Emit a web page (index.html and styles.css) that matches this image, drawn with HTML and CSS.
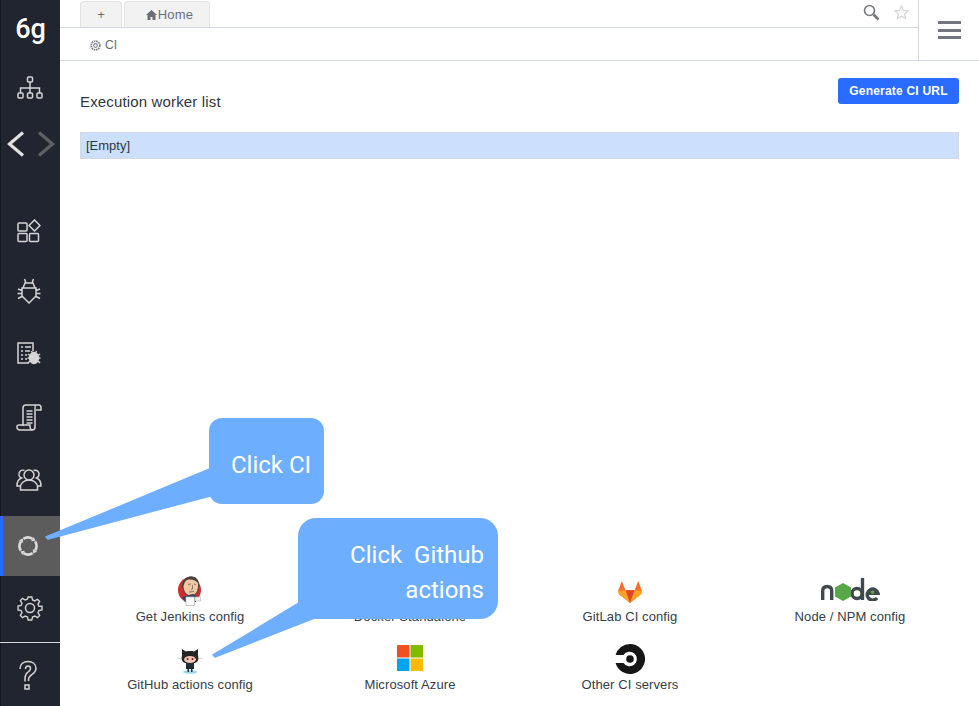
FILE: index.html
```html
<!DOCTYPE html>
<html lang="en">
<head>
<meta charset="utf-8">
<title>CI</title>
<link rel="stylesheet" href="styles.css">
</head>
<body>
<div class="app">
  <aside class="sidebar">
    <div class="logo">6g</div>
    <div class="side-item h-org">
      <svg width="26" height="26" viewBox="0 0 26 26" class="ic"><rect x="10.500" y="1" width="5" height="5" rx="1"/><path d="M13 6v6M3.500 17v-5h19v5M13 12v5"/><rect x="1" y="17" width="5" height="5" rx="1"/><rect x="10.500" y="17" width="5" height="5" rx="1"/><rect x="20" y="17" width="5" height="5" rx="1"/></svg>
    </div>
    <div class="side-nav">
      <svg width="18" height="26" viewBox="0 0 18 26" class="arrow"><path d="M16 1.500 2.500 13 16 24.500"/></svg>
      <svg width="18" height="26" viewBox="0 0 18 26" class="arrow dim"><path d="M2 1.500 15.500 13 2 24.500"/></svg>
    </div>
    <div class="side-item h-first">
      <svg width="24" height="24" viewBox="0 0 24 24" class="ic"><rect x="1" y="4" width="9" height="8" rx="1"/><rect x="1" y="14.500" width="9" height="8" rx="1"/><rect x="12.500" y="14.500" width="9" height="8" rx="1"/><path d="M17.500 1 23 6.500 17.500 12 12 6.500z"/></svg>
    </div>
    <div class="side-item h-62">
      <svg width="24" height="28" viewBox="0 0 24 28" class="ic"><path d="M7.500 1l1.500 4M16.500 1 15 5M8 5h8l2 5H6zM5 10h14v8l-7 7-7-7zM5 12.500 1 11M5 15.500H0.500M5 18.500l-4 2M19 12.500l4-1.500M19 15.500h4.500M19 18.500l4 2"/></svg>
    </div>
    <div class="side-item h-62">
      <svg width="24" height="24" viewBox="0 0 24 24" class="ic"><path d="M12 21H1V1h15v8"/><path d="M4 5h2M8 5h6M4 9h2M8 9h5M4 13h2M8 13h2M4 17h2M8 17h2"/><ellipse cx="17" cy="16" rx="4.500" ry="5.500" class="fill"/><path d="M11 12l2 1.500M10.500 16h2M11 21l2-2M23 12l-2 1.500M23.500 16h-2M23 21l-2-2M14.500 9l1 2M19.500 9l-1 2"/></svg>
    </div>
    <div class="side-item h-64 scroll">
      <svg width="26" height="28" viewBox="0 0 26 28" class="ic"><path d="M7 22V4c0-2 1-3 3-3h13c1 0 2 1 2 3v2h-5M20 1c-1 0-1 2-1 5v17c0 2-1 3-3 3H4c-2 0-3-1-3-3v-1c0-1 1-1 2-1h11v2c0 2 2 3 3 3"/><path d="M10.500 7h6M10.500 10h6M10.500 13h6M10.500 16h6M10.500 19h6"/></svg>
    </div>
    <div class="side-item h-67 users">
      <svg width="26" height="24" viewBox="0 0 26 24" class="ic"><circle cx="13" cy="7" r="5"/><path d="M4.500 22v-3c0-4 4-7 8.500-7s8.500 3 8.500 7v3z"/><path d="M8.500 2.500a4 4 0 0 0-3 7.500C2.500 11 1 14 1 18h3.500M17.500 2.500a4 4 0 0 1 3 7.500c3 1 4.500 4 4.500 8h-3.500"/></svg>
    </div>
    <div class="side-item active">
      <svg width="24" height="24" viewBox="0 0 24 24" class="ci"><circle cx="12" cy="12" r="8.500" pathLength="40" stroke-dasharray="7.200 2.800" transform="rotate(57 12 12)"/><path class="head" d="M21 17.800l-4.200-2.700.4 4.400z"/><path class="head" d="M21 17.800l-4.200-2.700.4 4.400z" transform="rotate(90 12 12)"/><path class="head" d="M21 17.800l-4.200-2.700.4 4.400z" transform="rotate(180 12 12)"/><path class="head" d="M21 17.800l-4.200-2.700.4 4.400z" transform="rotate(270 12 12)"/></svg>
    </div>
    <div class="side-item settings">
      <svg width="26" height="26" viewBox="0 0 26 26" class="ic"><circle cx="13" cy="13" r="4.500"/><path d="M11 1h4l.8 3.300 2.400 1 2.900-1.800 2.400 2.400-1.800 2.900 1 2.400L26 11v4l-3.300.8-1 2.400 1.800 2.900-2.400 2.400-2.900-1.800-2.400 1L15 26h-4l-.8-3.300-2.400-1-2.900 1.800-2.400-2.400 1.800-2.900-1-2.400L0 15v-4l3.300-.8 1-2.400-1.800-2.900 2.400-2.400 2.900 1.800 2.400-1z" transform="translate(1.040 1.040) scale(.92)"/></svg>
    </div>
    <div class="side-item help">
      <svg width="20" height="30" viewBox="0 0 20 30" class="ic"><path d="M2 9c0-5 3.500-7.500 8-7.500s8 2.500 8 7c0 3-2 4.500-4 6-2 1.500-3.500 2.500-3.500 5.500v1M7.500 9c0-2 1-3 2.500-3s2.500 1 2.500 2.500-1 2.500-2.500 3.500c-2 1.500-3 3.500-3 6.500v3"/><rect x="7" y="25" width="4" height="4"/></svg>
    </div>
  </aside>

  <main class="main">
    <header class="header">
      <div class="header-left">
        <div class="tabbar">
          <div class="tabs">
            <div class="tab tab-plus">+</div>
            <div class="tab tab-home">
              <svg width="11" height="10" viewBox="0 0 11 10" class="home-ic"><path d="M5.500 0 0 5h1.500v5h3V7h2v3h3V5H11z"/></svg>Home
            </div>
          </div>
          <div class="tools">
            <svg width="17" height="17" viewBox="0 0 17 17" class="search"><circle cx="6.500" cy="6.500" r="5"/><path d="m10.500 10.500 5 5"/></svg>
            <svg width="15" height="15" viewBox="0 0 15 15" class="star"><path d="m7.500 1 1.900 4.300 4.600.5-3.400 3.100 1 4.600-4.100-2.400-4.100 2.400 1-4.600L1 5.800l4.600-.5z"/></svg>
          </div>
        </div>
        <div class="crumb">
          <svg width="11" height="11" viewBox="0 0 24 24" class="crumb-ic"><circle cx="12" cy="12" r="4"/><circle cx="12" cy="12" r="9.500" stroke-dasharray="3.500 1.500" stroke-width="4"/></svg>
          <span>CI</span>
        </div>
      </div>
      <button class="menu" type="button" aria-label="Menu"><span></span><span></span><span></span></button>
    </header>

    <section class="content">
      <div class="title-row">
        <h1 class="title">Execution worker list</h1>
        <button class="primary" type="button">Generate CI URL</button>
      </div>
      <div class="empty">[Empty]</div>

      <div class="providers">
        <div class="provider">
          <svg width="26" height="30" viewBox="0 0 26 30"><ellipse cx="12.500" cy="14" rx="11.500" ry="12.500" fill="#c8302d"/><path d="M6 11C5 5 9 1 14 1s8 4 7.500 9c-.3 4-1.500 8-5 9l-5 .5C8 18 6.500 15 6 11z" fill="#eec9a8" stroke="#3f3833" stroke-width=".9"/><path d="M6 11C4 5 9 .5 14 .5c5 0 8 3.500 7.500 7-2-3-7-5-11.500-3.500C8 5 7 8 6 11z" fill="#4a3f3c"/><path d="M11 8.500l3-.5M17 8l2 .5M15.500 9v4l-1.500.5M12 16l5-.5" fill="none" stroke="#7a5a48" stroke-width=".8"/><path d="M5 21l11-3 4 3-1 5H8z" fill="#2b4a63"/><path d="M9 21h8.500v8.500H9z" fill="#fff" stroke="#b5b5b5" stroke-width=".8"/><path d="M18 21h5.500v4H18z" fill="#eee" stroke="#aaa" stroke-width=".5"/></svg>
          <span>Get Jenkins config</span>
        </div>
        <div class="provider">
          <div class="icon-slot"></div>
          <span>Docker Standalone</span>
        </div>
        <div class="provider">
          <svg class="gitlab" width="24" height="22" viewBox="0 0 26 24"><path d="M13 24 1 14.500 0 11 4 0l4 10h10l4-10 4 11-1 3.500z" fill="#fc6d26"/><path d="M13 24 8 10h10z" fill="#e24329"/><path d="M0 11l8-1 5 14-12-9.500z" fill="#fca326"/><path d="M26 11l-8-1-5 14 12-9.500z" fill="#fca326"/></svg>
          <span>GitLab CI config</span>
        </div>
        <div class="provider">
          <svg class="node" width="60" height="23" viewBox="0 0 60 23"><g fill="none" stroke="#3f4a4f" stroke-width="3.400"><path d="M2.700 22V13c0-3 2-4.500 4.500-4.500s4.500 1.500 4.500 4.500v9"/><circle cx="37" cy="15.500" r="5"/><path d="M42.500 0v22"/><path d="M57 20a5.500 5.500 0 1 1 1-4.800H47.500"/></g><path d="M23 5l8 4.500v9L23 23l-8-4.500v-9z" fill="#57a846"/><circle cx="52.500" cy="14.500" r="1.600" fill="#57a846"/></svg>
          <span>Node / NPM config</span>
        </div>
        <div class="provider">
          <svg width="28" height="26" viewBox="0 0 28 26"><ellipse cx="14" cy="24" rx="7" ry="1.800" fill="#9cd6f2"/><path d="M1 10l5 1M27 10l-5 1" stroke="#ccc" stroke-width=".8"/><path d="M6 1l4 2.500c2.500-.6 5.500-.6 8 0L22 1v7c1 3 0 6-3 7H9c-3-1-4-4-3-7z" fill="#262626"/><ellipse cx="14" cy="11.500" rx="6" ry="3.500" fill="#f3c3b4"/><circle cx="11.500" cy="11" r="1" fill="#5a2b20"/><circle cx="16.500" cy="11" r="1" fill="#5a2b20"/><path d="M10 15h8v6h-1.500v3h-1.500v-3h-2v3h-1.500v-3H10z" fill="#1f2d3a"/></svg>
          <span>GitHub actions config</span>
        </div>
        <div class="provider">
          <svg class="azure" width="26" height="26" viewBox="0 0 26 26"><rect width="12.500" height="12.500" fill="#f25022"/><rect x="13.500" width="12.500" height="12.500" fill="#7fba00"/><rect y="13.500" width="12.500" height="12.500" fill="#00a4ef"/><rect x="13.500" y="13.500" width="12.500" height="12.500" fill="#ffb900"/></svg>
          <span>Microsoft Azure</span>
        </div>
        <div class="provider">
          <svg width="30" height="30" viewBox="0 0 30 30"><circle cx="15" cy="15" r="3.800" fill="#161616"/><path d="M15 0A15 15 0 1 1 .6 19h7.900a7.300 7.300 0 1 0 0-8H.6A15 15 0 0 1 15 0z" fill="#161616"/></svg>
          <span>Other CI servers</span>
        </div>
      </div>
    </section>
  </main>

  <svg class="tails" width="979" height="706" viewBox="0 0 979 706" aria-hidden="true">
    <path d="M212 468 46 537l2 2 166-44z"/>
    <path d="M304 600 213 655l2 2 102-40z"/>
  </svg>
  <div class="callout callout-ci">Click CI</div>
  <div class="callout callout-gh">Click&nbsp; Github actions</div>
</div>
</body>
</html>
```

FILE: styles.css
```css
* { box-sizing: border-box; }
html, body { margin: 0; height: 100%; background: #fff; }
body { font-family: "Liberation Sans", Arial, sans-serif; color: #2f3640; overflow: hidden; }
.app { position: relative; display: flex; width: 979px; height: 706px; overflow: hidden; }

.sidebar { width: 60px; flex: none; display: flex; flex-direction: column; background: #21252f; border-left: 1px solid #15171c; }
.logo { height: 60px; display: flex; align-items: center; justify-content: center; color: #fff; font: 500 27px/1 Roboto, sans-serif; padding: 0 0 2px 0; }
.side-item { display: flex; align-items: center; justify-content: center; flex: none; padding-right: 4px; }
.side-nav { height: 52px; display: flex; align-items: center; justify-content: center; gap: 12px; margin-bottom: 30px; }
.h-org { height: 58px; padding-right: 2px; }
.h-first { height: 61px; }
.h-62 { height: 62px; }
.h-64 { height: 64px; }
.h-67 { height: 67px; }
.scroll { padding-top: 2px; padding-right: 3px; }
.users { padding-bottom: 5px; }
.ic { fill: none; stroke: #d5d5d5; stroke-width: 1.500; }
.ic .fill { fill: #d5d5d5; }
.ci { fill: none; stroke: #dcdcdc; stroke-width: 2.600; }
.ci .head { fill: #dcdcdc; stroke: none; }
.arrow { fill: none; stroke: #e2e2e2; stroke-width: 3.200; }
.arrow.dim { stroke: #5f6063; }
.active { height: 60px; background: #5c5c5c; border-left: 3px solid #2a6cff; margin-left: -1px; padding-right: 8px; }
.settings { height: 67px; border-bottom: 1px solid #d8d8d8; margin-left: -1px; padding: 0 1px 2px 0; }
.help { height: 63px; padding-right: 6px; }

.main { flex: 1; min-width: 0; display: flex; flex-direction: column; }
.header { height: 61px; flex: none; display: flex; border-bottom: 1px solid #d3d9de; }
.header-left { flex: 1; min-width: 0; display: flex; flex-direction: column; border-right: 1px solid #d3d9de; }
.tabbar { height: 28px; flex: none; display: flex; justify-content: space-between; border-bottom: 1px solid #d3d9de; padding-left: 20px; }
.tabs { display: flex; gap: 2px; padding-top: 1px; }
.tab { height: 26px; display: flex; align-items: center; justify-content: center; background: #f2f2f2; border: 1px solid #dfe3e6; border-bottom: 0; border-radius: 4px 4px 0 0; color: #6b6f75; font-size: 13px; }
.tab-plus { width: 42px; }
.tab-home { width: 86px; padding-left: 5px; letter-spacing: .2px; }
.home-ic { fill: #6b6f75; margin-right: 1px; }
.tools { display: flex; align-items: center; gap: 14px; padding: 0 9px 3px 0; }
.search { fill: none; stroke: #74787e; stroke-width: 1.600; }
.search path { stroke-width: 2.600; }
.star { fill: none; stroke: #d5d7da; stroke-width: 1.300; }
.crumb { flex: 1; display: flex; align-items: center; gap: 4px; padding: 2px 0 0 30px; color: #676b70; font-size: 12px; }
.crumb-ic { fill: none; stroke: #80848a; stroke-width: 2.500; }
.menu { width: 60px; flex: none; display: flex; flex-direction: column; justify-content: center; gap: 4.500px; padding: 0 0 0 19px; margin: 0; background: none; border: 0; }
.menu span { display: block; height: 3px; width: 23px; background: #73777f; }

.content { flex: 1; min-height: 0; display: flex; flex-direction: column; padding: 17px 20px 0; }
.title-row { display: flex; justify-content: space-between; align-items: flex-start; height: 26px; }
.title { margin: 15px 0 0; font-size: 15px; font-weight: 400; line-height: 18px; letter-spacing: .15px; color: #2f3640; }
.primary { width: 121px; height: 26px; padding: 0; margin: 0; background: #2a6cff; color: #fff; border: 0; border-radius: 3px; font: 700 12px/26px "Liberation Sans", Arial, sans-serif; letter-spacing: .2px; }
.empty { height: 27px; margin-top: 28px; padding-left: 5px; line-height: 25px; font-size: 13px; background: #cce0fd; border: 1px solid #d3d9de; color: #2f3640; }

.providers { margin-top: auto; padding-bottom: 14px; display: grid; grid-template-columns: repeat(4, 220px); grid-auto-rows: 68px; }
.provider { display: flex; flex-direction: column; align-items: center; justify-content: flex-end; gap: 3px; font-size: 13px; line-height: 15px; letter-spacing: .1px; color: #363c46; }
.provider svg { flex: none; display: block; }
.icon-slot { height: 26px; }
.gitlab { margin-bottom: 3px; }
.node { margin-bottom: 5px; }
.azure { margin-bottom: 3px; }

.tails { position: absolute; left: 0; top: 0; pointer-events: none; }
.tails path { fill: #6eaeff; stroke: #6eaeff; stroke-width: 1.500; stroke-linejoin: round; }
.callout { position: absolute; background: #6eaeff; color: #fff; font-family: Roboto, sans-serif; font-size: 24px; }
.callout-ci { left: 209px; top: 418px; width: 115px; height: 86px; border-radius: 13px; padding-left: 22px; line-height: 94px; }
.callout-gh { left: 298px; top: 518px; width: 200px; height: 101px; border-radius: 18px; padding: 20px 14px 0 30px; line-height: 35px; text-align: right; }
```
